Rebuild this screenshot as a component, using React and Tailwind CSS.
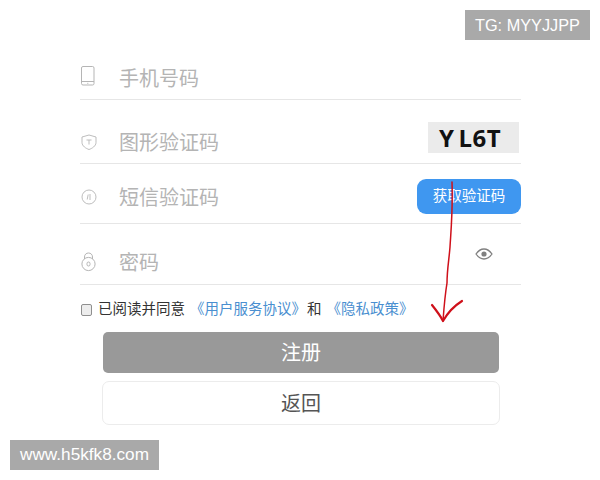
const font = { fontFamily: '"Liberation Sans", "Noto Sans CJK SC", sans-serif' };

function PhoneIcon() {
  return (
    <svg className="mt-[-3px]" width="14" height="20" viewBox="0 0 14 20" fill="none" stroke="#b5b5b5" strokeWidth="1">
      <rect x="0.500" y="0.500" width="12.500" height="18.500" rx="1.500" />
      <path d="M0.500 15.500h12.500" />
      <path d="M6.300 17.300h1" />
    </svg>
  );
}
function ShieldIcon() {
  return (
    <svg width="16" height="16" viewBox="0 0 16 16" fill="none" stroke="#b5b5b5" strokeWidth="0.9">
      <path d="M8 1 L15 3 V8.500 C15 12 11 14.500 8 15.500 C5 14.500 1 12 1 8.500 V3 Z" />
      <path d="M5.500 6h5M8 6v4.500" />
    </svg>
  );
}
function CircleIcon() {
  return (
    <svg width="16" height="16" viewBox="0 0 16 16" fill="none" stroke="#b5b5b5" strokeWidth="0.9">
      <circle cx="8" cy="8" r="7" />
      <path d="M6.200 10.500 L7.200 5.500 M9 11 V5" />
    </svg>
  );
}
function LockIcon() {
  return (
    <svg width="15" height="20" viewBox="0 0 15 20" fill="none" stroke="#b5b5b5" strokeWidth="1">
      <path d="M3.500 7 V5 C3.500 2.500 5.300 1 7.500 1 C9.700 1 11.500 2.500 11.500 5 V7" />
      <circle cx="7.500" cy="12" r="6.600" />
      <rect x="6" y="10" width="3" height="4" rx="1.500" />
    </svg>
  );
}
function EyeIcon() {
  return (
    <svg width="18" height="12" viewBox="0 0 18 12" fill="none">
      <path d="M1 6 C3.500 2.400 6 1 9 1 C12 1 14.500 2.400 17 6 C14.500 9.600 12 11 9 11 C6 11 3.500 9.600 1 6 Z" stroke="#808080" strokeWidth="1.300" />
      <circle cx="9" cy="6" r="2.600" fill="#808080" />
    </svg>
  );
}

function Row({ icon, label, height, textClass = "", children }) {
  return (
    <div className={`flex items-center justify-between border-b border-[#e6e6e6] ${height}`}>
      <div className={`flex items-center ${textClass}`}>
        <span className="flex w-[39px] items-center pl-px">{icon}</span>
        <span className="mt-[2px] text-[20px] leading-[28px] text-[#b4b4b4]">{label}</span>
      </div>
      {children}
    </div>
  );
}

export default function App() {
  return (
    <div className="relative h-[480px] w-[600px] overflow-hidden bg-white" style={font}>
      <div className="ml-[80px] w-[441px] pt-[36px]">
        <Row icon={<PhoneIcon />} label="手机号码" height="h-[64px]" textClass="pt-[20px]" />
        <Row icon={<ShieldIcon />} label="图形验证码" height="h-[64px]" textClass="pt-[20px]">
          <div className="mr-[2px] mt-[12px] flex h-[31px] w-[91px] items-center bg-[#ebebeb] pl-[11px] text-[24px] font-bold leading-none tracking-[0.5px] text-[#111]" style={{ fontFamily: '"Open Sans", sans-serif' }}>
            <span className="mr-[4px]">Y</span>L6T
          </div>
        </Row>
        <Row icon={<CircleIcon />} label="短信验证码" height="h-[60px]" textClass="pt-[7px]">
          <button className="mt-[6px] flex h-[35px] w-[104px] items-center justify-center rounded-[9px] bg-[#3f97f0] text-[14.5px] text-white">
            获取验证码
          </button>
        </Row>
        <Row icon={<LockIcon />} label="密码" height="h-[61px]" textClass="pt-[16px]">
          <span className="mr-[28px] mt-[-1px] flex"><EyeIcon /></span>
        </Row>
        <div className="mt-[15px] flex h-[20px] items-center text-[14.5px] text-[#333]">
          <span className="ml-px mr-[6px] h-[12px] w-[11px] rounded-[2px] border border-[#8f8f8f] bg-[#ededed]" />
          <span>已阅读并同意</span>
          <span className="ml-[5px] text-[#4a8fd0]">《用户服务协议》</span>
          <span className="ml-px">和</span>
          <span className="ml-[5px] text-[#4a8fd0]">《隐私政策》</span>
        </div>
        <div className="ml-px mt-[12px] flex flex-col items-center">
          <button className="flex h-[41px] w-[396px] items-center justify-center rounded-[5px] bg-[#999999] text-[20px] text-white">
            注册
          </button>
          <button className="mt-[8px] flex h-[44px] w-[398px] items-center justify-center rounded-[7px] border border-[#ececec] bg-white pt-[2px] text-[20px] text-[#555]">
            返回
          </button>
        </div>
      </div>

      <div className="absolute right-[10px] top-[10px] flex h-[30px] w-[125px] items-center justify-center bg-[#a9a9a9] text-[16.300px] text-white">
        TG: MYYJJPP
      </div>
      <div className="absolute left-[10px] top-[440px] flex h-[30px] w-[149px] items-center justify-center bg-[#a9a9a9] text-[17.200px] text-white">
        www.h5kfk8.com
      </div>

      <svg className="absolute left-[425px] top-[175px]" width="50" height="150" viewBox="0 0 50 150" fill="none" stroke="#cf101a" strokeLinecap="round" strokeLinejoin="round">
        <path d="M27 7 C28 35 26 55 25 72 C24 85 22 95 22 108 C20 120 19 132 18 146" strokeWidth="1.500" />
        <path d="M7 130 C11 135 15 140 18 146 C22 139 29 131 37 126" strokeWidth="2.200" />
      </svg>
    </div>
  );
}
